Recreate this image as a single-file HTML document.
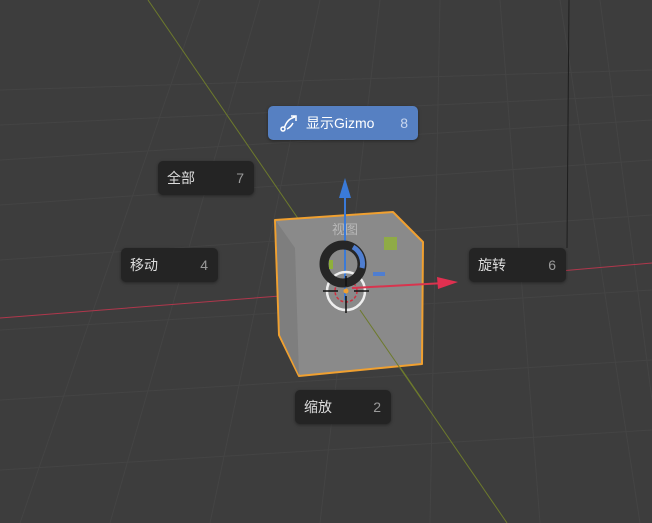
<!DOCTYPE html>
<html><head><meta charset="utf-8"><style>
body{margin:0;width:652px;height:523px;overflow:hidden;background:#3d3d3d;font-family:"Liberation Sans","Noto Sans CJK SC",sans-serif;}
svg{position:absolute;left:0;top:0}
.b{position:absolute;height:34px;background:#242424;border-radius:5px;color:#dcdcdc;font-size:14px;line-height:34px;box-shadow:0 1px 3px rgba(0,0,0,.4)}
.b .l{position:absolute;left:9px}
.b .n{position:absolute;right:10px;color:#9a9a9a}
</style></head><body>
<svg width="652" height="523" viewBox="0 0 652 523">
<g stroke="#444" stroke-width="1" fill="none">
<path d="M0 160 L652 120 M0 205 L652 160 M0 260 L652 215 M0 330 L652 290 M0 400 L652 360 M0 470 L652 430 M0 90 L652 70 M0 125 L652 95"/>
<path d="M20 523 L200 0 M110 523 L260 0 M210 523 L320 0 M320 523 L380 0 M430 523 L440 0 M540 523 L500 0 M640 523 L560 0 M652 400 L600 0"/>
</g>
<line x1="148" y1="0" x2="507" y2="523" stroke="#6d7a2c" stroke-width="1"/>
<line x1="569" y1="0" x2="567" y2="248" stroke="#1e1e1e" stroke-width="1"/>
<line x1="0" y1="318" x2="280" y2="296" stroke="#b0374c" stroke-width="1"/>
<line x1="560" y1="271" x2="652" y2="263" stroke="#b0374c" stroke-width="1"/>
<polygon points="275,220 393,212 423,242 422,364 299,376 279,335" fill="#8a8a8a" stroke="#f0a030" stroke-width="2" stroke-linejoin="round"/>
<polygon points="276,221 295,248 299,375 280,335" fill="#7e7e7e"/>
<line x1="360" y1="310" x2="422" y2="400" stroke="#6d7a2c" stroke-width="1"/>
<text x="345" y="234" font-size="13" fill="#b8b8b8" text-anchor="middle" font-family="Noto Sans CJK SC,sans-serif">视图</text>
<rect x="384" y="237" width="13" height="13" fill="#8fb03a" opacity=".85"/>
<line x1="345" y1="196" x2="345" y2="300" stroke="#3a7ad8" stroke-width="2"/>
<polygon points="345,178 339,198 351,198" fill="#3a7ad8"/>
<circle cx="346" cy="291" r="19" fill="none" stroke="#eee" stroke-width="2.5"/>
<circle cx="346" cy="291" r="11" fill="none" stroke="#d03040" stroke-width="1.5" stroke-dasharray="3 2"/>
<circle cx="343" cy="264" r="19" fill="none" stroke="#262626" stroke-width="9"/>
<path d="M353 247 A19 19 0 0 1 362 268" fill="none" stroke="#4f7ed0" stroke-width="5"/>
<rect x="329" y="260" width="4" height="9" fill="#8fb03a"/>
<rect x="373" y="272" width="12" height="4" fill="#4f7ed0"/>
<line x1="352" y1="288" x2="445" y2="283" stroke="#d8344e" stroke-width="2"/>
<polygon points="458,282 437,277 438,289" fill="#e03050"/>
<path d="M323 291 H338 M354 291 H369 M346 276 V286 M346 296 V313" stroke="#111" stroke-width="1.5"/>
<circle cx="346" cy="291" r="2.5" fill="#f0a030"/>
</svg>
<div class="b" style="left:268px;top:106px;width:150px;background:#5680c2;color:#fff">
<svg width="20" height="20" style="position:absolute;left:11px;top:7px" viewBox="0 0 20 20" fill="none" stroke="#fff" stroke-width="1.5"><circle cx="4" cy="16" r="2"/><path d="M5.5 14.5 Q8 6 16 4 M12 3 H17 V8 M8 16 Q12 14 14 10"/></svg>
<span class="l" style="left:38px">显示Gizmo</span><span class="n" style="color:#c8d6ee">8</span></div>
<div class="b" style="left:158px;top:161px;width:96px"><span class="l">全部</span><span class="n">7</span></div>
<div class="b" style="left:121px;top:248px;width:97px"><span class="l">移动</span><span class="n">4</span></div>
<div class="b" style="left:469px;top:248px;width:97px"><span class="l">旋转</span><span class="n">6</span></div>
<div class="b" style="left:295px;top:390px;width:96px"><span class="l">缩放</span><span class="n">2</span></div>
</body></html>
